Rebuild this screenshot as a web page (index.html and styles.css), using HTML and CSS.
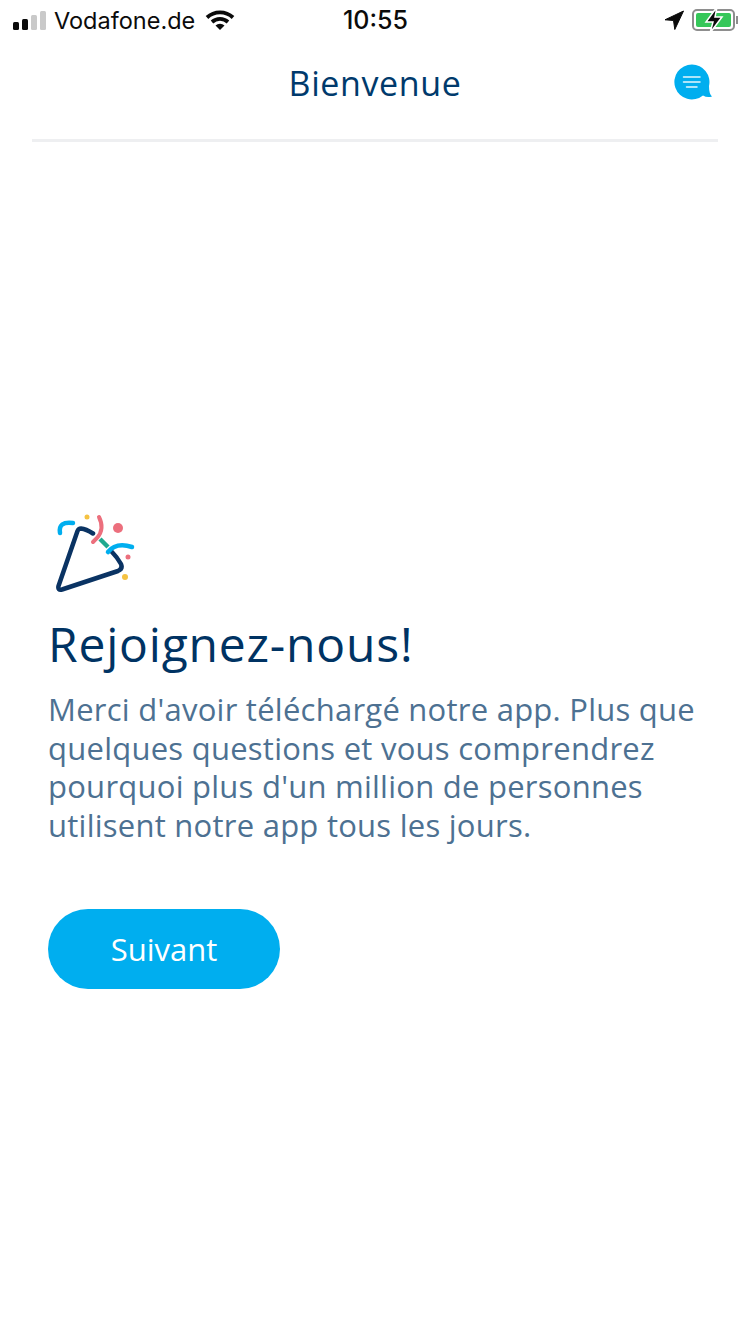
FILE: index.html
```html
<!DOCTYPE html>
<html lang="fr">
<head>
    <meta charset="UTF-8">
    <meta name="viewport" content="width=device-width, initial-scale=1.0">
    <title>Bienvenue</title>
    <link rel="stylesheet" href="styles.css">
</head>
<body>
    <div class="status-bar">
        <div class="status-left">
            <div class="signal">
                <span class="bar bar-1"></span>
                <span class="bar bar-2"></span>
                <span class="bar bar-3"></span>
                <span class="bar bar-4"></span>
            </div>
            <span class="carrier">Vodafone.de</span>
            <svg class="wifi" width="30" height="22" viewBox="0 0 30 22">
                <path d="M2 8.5 A19 19 0 0 1 28 8.5" fill="none" stroke="#0b0b0b" stroke-width="3.8"/>
                <path d="M7 13 A12 12 0 0 1 23 13" fill="none" stroke="#0b0b0b" stroke-width="3.8"/>
                <path d="M10.5 16.6 L15 21 L19.5 16.6 A6.5 6.5 0 0 0 10.5 16.6 Z" fill="#0b0b0b"/>
            </svg>
        </div>
        <div class="status-time">10:55</div>
        <div class="status-right">
            <svg class="location" width="20" height="20" viewBox="0 0 20 20">
                <path d="M19.500 1 L1 9.800 L9.500 10.500 L10.800 19.500 Z" fill="#0b0b0b" stroke="#0b0b0b" stroke-width="1" stroke-linejoin="round"/>
            </svg>
            <div class="battery">
                <div class="battery-body">
                    <div class="battery-level"></div>
                    <svg class="bolt" width="22" height="28" viewBox="0 0 22 28">
                        <path d="M14 1 L3 16 H10 L7 27 L19 11 H12 Z" fill="#0b0b0b" stroke="#fff" stroke-width="1.5"/>
                    </svg>
                </div>
                <span class="battery-cap"></span>
            </div>
        </div>
    </div>

    <header class="nav">
        <h1 class="nav-title">Bienvenue</h1>
        <svg class="chat-icon" width="40" height="38" viewBox="0 0 40 38">
            <path d="M18 2.500 A17.500 17.500 0 1 0 29 33.500 Q33 36 38 34.500 Q35 32 35 24 A17.500 17.500 0 0 0 18 2.500 Z" fill="#00aeef"/>
            <path d="M9.500 15 H26 M9.500 20 H26 M12.500 25 H23" stroke="#fff" stroke-width="1.500" stroke-linecap="round" opacity="0.9"/>
        </svg>
    </header>

    <main class="content">
        <svg class="party-icon" width="80" height="80" viewBox="0 0 80 80">
            <!-- cone outline, the top edge is split by the ribbons -->
            <path d="M37 19.500 Q30 15 25 14.500 Q22.500 14.500 21.500 17 L2.500 72 Q1.500 76.500 6 75.500 L62 57 Q67 55 65 50 Q61 43 56 38" fill="none" stroke="#0a3363" stroke-width="4.500" stroke-linecap="round" stroke-linejoin="round"/>
            <path d="M44 25 L52 33" fill="none" stroke="#1fa98f" stroke-width="4.500"/>
            <path d="M4 19 Q2 7 17 9" fill="none" stroke="#00aeef" stroke-width="4.500" stroke-linecap="round"/>
            <path d="M43 3 Q49 15 41 24 L37 28" fill="none" stroke="#ec6f7d" stroke-width="4" stroke-linecap="round"/>
            <path d="M52 38 Q60 28 76 33" fill="none" stroke="#00aeef" stroke-width="4.500" stroke-linecap="round"/>
            <circle cx="62" cy="14" r="5" fill="#ec6f7d"/>
            <circle cx="31" cy="3" r="2.500" fill="#f5c242"/>
            <circle cx="72" cy="43" r="2.500" fill="#ec6f7d"/>
            <circle cx="69" cy="63" r="3" fill="#f5c242"/>
        </svg>
        <h2 class="heading">Rejoignez-nous!</h2>
        <p class="intro">Merci d'avoir téléchargé notre app. Plus que quelques questions et vous comprendrez pourquoi plus d'un million de personnes utilisent notre app tous les jours.</p>
        <button class="next-button">Suivant</button>
    </main>
</body>
</html>
```

FILE: styles.css
```css
* {
    box-sizing: border-box;
}

body {
    margin: 0;
    width: 750px;
    height: 1334px;
    background-color: #fff;
    font-family: 'Open Sans', 'Liberation Sans', sans-serif;
    overflow: hidden;
}

.status-bar {
    display: grid;
    grid-template-columns: 1fr auto 1fr;
    align-items: center;
    height: 40px;
    padding: 0 12px 0 13px;
    color: #0b0b0b;
}

.status-left {
    display: flex;
    align-items: center;
}

.signal {
    display: flex;
    align-items: flex-end;
    gap: 3px;
    height: 19px;
    margin-right: 8px;
}

.bar {
    width: 6px;
    border-radius: 1.5px;
    background-color: #c9c9c9;
}

.bar-1 {
    height: 8px;
    background-color: #0b0b0b;
}

.bar-2 {
    height: 11px;
    background-color: #0b0b0b;
}

.bar-3 {
    height: 15px;
}

.bar-4 {
    height: 19px;
}

.carrier {
    font-family: 'Inter', 'Liberation Sans', sans-serif;
    font-size: 23.5px;
    margin-right: 10px;
}

.status-time {
    font-family: 'Inter', 'Liberation Sans', sans-serif;
    font-size: 25px;
    font-weight: 500;
}

.status-right {
    display: flex;
    align-items: center;
    justify-content: flex-end;
    gap: 8px;
}

.battery {
    display: flex;
    align-items: center;
}

.battery-body {
    position: relative;
    width: 43px;
    height: 22px;
    padding: 2px;
    border: 2px solid #8e8e8e;
    border-radius: 5px;
}

.battery-level {
    height: 100%;
    border-radius: 2px;
    background-color: #35c759;
}

.bolt {
    position: absolute;
    top: -5px;
    left: 9px;
}

.battery-cap {
    width: 2px;
    height: 8px;
    margin-left: 1px;
    background-color: #8e8e8e;
}

.nav {
    position: relative;
    display: flex;
    justify-content: center;
    align-items: center;
    height: 102px;
    margin: 0 32px 0;
    padding-bottom: 13px;
    border-bottom: 3px solid #eeeff1;
}

.nav-title {
    margin: 0;
    font-size: 34px;
    letter-spacing: 0.6px;
    font-weight: 400;
    color: #003a6c;
}

.chat-icon {
    position: absolute;
    top: 22px;
    right: 4px;
}

.content {
    padding: 372px 48px 0;
}

.party-icon {
    display: block;
    margin: 0 0 20px 8px;
}

.heading {
    margin: 0;
    font-size: 48px;
    letter-spacing: 0.8px;
    line-height: 60px;
    font-weight: 400;
    color: #003363;
}

.intro {
    margin: 16px 0 0;
    font-size: 31px;
    letter-spacing: 0.25px;
    line-height: 38.500px;
    color: #4d7192;
}

.next-button {
    display: block;
    width: 232px;
    height: 80px;
    margin-top: 65px;
    border: none;
    border-radius: 40px;
    background-color: #00aeef;
    color: #fff;
    font-family: inherit;
    font-size: 31px;
    cursor: pointer;
}
```
